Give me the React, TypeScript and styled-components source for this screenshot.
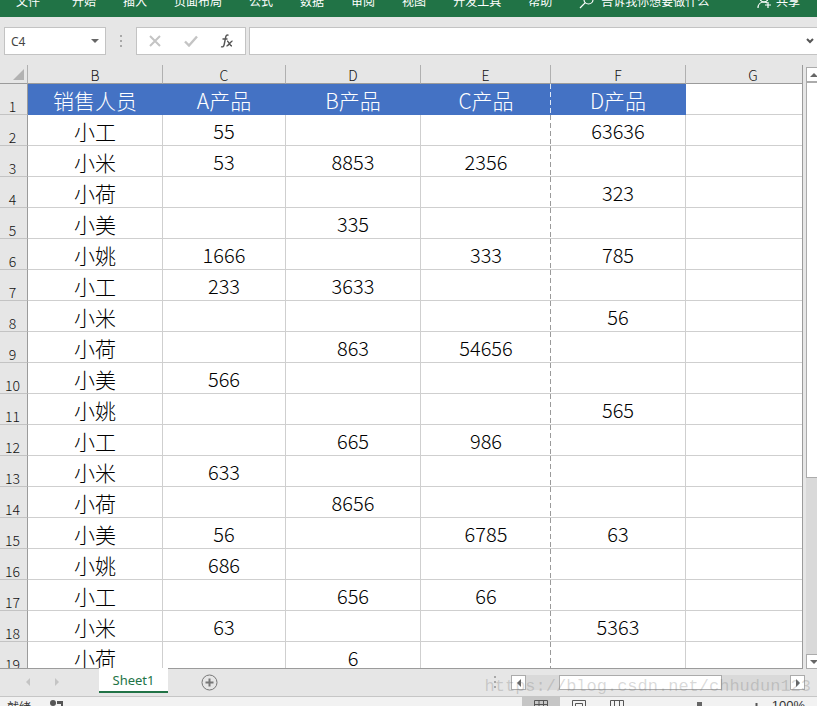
import React from "react";
import styled, { createGlobalStyle } from "styled-components";

const ui = `"Noto Sans", "Noto Sans CJK SC", sans-serif`;
const cjk = `"Noto Sans CJK SC", sans-serif`;

const Global = createGlobalStyle`
  * { box-sizing: border-box; }
  html, body { margin: 0; height: 100%; overflow: hidden; }
  #root { height: 100%; }
  button, input { font: inherit; color: inherit; margin: 0; padding: 0; border: 0; background: none; outline: none; border-radius: 0; }
  button { display: inline-flex; align-items: center; justify-content: center; flex: none; }
  svg { display: block; flex: none; }
`;

const Window = styled.div`
  height: 100vh;
  display: flex;
  flex-direction: column;
  overflow: hidden;
  background: #e6e6e6;
  font-family: ${ui};
  font-size: 12px;
`;

const Ribbon = styled.nav`
  flex: none;
  height: 17px;
  padding: 0 17px 8px 16px;
  display: flex;
  align-items: flex-end;
  gap: 27px;
  overflow: hidden;
  background: #217346;
  color: #fff;
  font-family: ${cjk};
  line-height: 16px;
  white-space: nowrap;
`;

const RibbonTab = styled.button<{ $file?: boolean }>`
  margin-right: ${(p) => (p.$file ? 5 : 0)}px;
`;

const RibbonAction = styled.button<{ $end?: boolean }>`
  gap: ${(p) => (p.$end ? 4 : 7)}px;
  margin-left: ${(p) => (p.$end ? "auto" : "0")};
`;

const FormulaRow = styled.div`
  flex: none;
  display: flex;
  padding: 10px 0 0 4px;
  height: 38px;
`;

const NameBox = styled.div`
  display: flex;
  align-items: center;
  width: 102px;
  padding: 0 6px;
  background: #fff;
  border: 1px solid #c3c3c3;
  color: #444;
  input { flex: 1; min-width: 0; }
`;

const Grip = styled.div`
  width: 30px;
  display: flex;
  align-items: center;
  justify-content: center;
`;

const FormulaTools = styled.div`
  display: flex;
  align-items: center;
  justify-content: space-between;
  width: 110px;
  padding: 0 11px;
  margin-right: 3px;
  background: #fff;
  border: 1px solid #c3c3c3;
`;

const FormulaInput = styled.div`
  flex: 1;
  min-width: 0;
  display: flex;
  align-items: center;
  background: #fff;
  border: 1px solid #c3c3c3;
  border-right: 0;
  padding: 0 3px 0 4px;
  input { flex: 1; min-width: 0; height: 100%; }
`;

const Work = styled.main`
  flex: 1;
  min-height: 0;
  display: flex;
  padding-top: 10px;
`;

const SheetArea = styled.div`
  flex: 1;
  min-width: 0;
  overflow: hidden;
  border-right: 1px solid #9b9b9b;
  border-bottom: 1px solid #9b9b9b;
  background: linear-gradient(#e6e6e6 19px, #fff 19px);
`;

const Sheet = styled.table`
  width: 100%;
  table-layout: fixed;
  border-collapse: separate;
  border-spacing: 0;
  font-family: ${cjk};
`;

const Col = styled.col<{ $w?: number }>`
  width: ${(p) => (p.$w ? `${p.$w}px` : "auto")};
`;

const ColumnHead = styled.th<{ $last?: boolean }>`
  height: 19px;
  padding: 2px 0 0 ${(p) => (p.$last ? 18 : 0)}px;
  background: #e6e6e6;
  border-right: ${(p) => (p.$last ? "0" : "1px solid #b0b0b0")};
  border-bottom: 1px solid #9b9b9b;
  font-size: 14px;
  font-weight: 300;
  line-height: 16px;
  color: #111;
`;

const Corner = styled(ColumnHead)`
  padding: 0 3px 0 0;
  svg { margin-left: auto; }
`;

const RowHead = styled.th`
  height: 31px;
  padding: 0 2px 0 0;
  background: #e6e6e6;
  border-right: 1px solid #9b9b9b;
  border-bottom: 1px solid #c3c3c3;
  vertical-align: bottom;
  font-size: 14px;
  font-weight: 300;
  line-height: 16px;
  color: #111;
`;

const Cell = styled.td<{ $title?: boolean; $name?: boolean; $pageBreak?: boolean }>`
  height: 31px;
  padding: 2px 0 0;
  text-align: center;
  font-size: ${(p) => (p.$title || p.$name ? 21 : 20)}px;
  font-weight: 300;
  line-height: 28px;
  color: ${(p) => (p.$title ? "#fff" : "#000")};
  background: ${(p) => (p.$title ? "#4472c4" : "#fff")};
  border-bottom: 1px solid ${(p) => (p.$title ? "#4472c4" : "#cfcfcf")};
  border-right: 1px solid ${(p) => (p.$title ? "#4472c4" : "#cfcfcf")};
  ${(p) =>
    p.$pageBreak &&
    `border-right: 0;
     background: repeating-linear-gradient(${p.$title ? "#dfe8f6" : "#9a9a9a"} 0 5px, transparent 5px 8px) right / 1px 100% no-repeat ${p.$title ? "#4472c4" : "#fff"};`}
  &:last-child { border-right: 0; }
`;

const VScroll = styled.div`
  flex: none;
  width: 11px;
  margin-left: 3px;
  display: flex;
  flex-direction: column;
  padding-top: 2px;
  overflow: hidden;
  background: linear-gradient(#e6e6e6 2px, #d9d9d9 2px);
`;

const ScrollButton = styled.button`
  width: 15px;
  height: 15px;
  background: #fff;
  border: 1px solid #ababab;
  align-self: flex-start;
`;

const VThumb = styled.div`
  flex: 0 1 396px;
  width: 15px;
  margin-bottom: auto;
  background: #fff;
  border: 1px solid #ababab;
`;

const TabBar = styled.div`
  position: relative;
  flex: none;
  height: 27px;
  display: flex;
  align-items: flex-start;
  padding-left: 22px;
`;

const TabArrow = styled.button`
  width: 12px;
  height: 26px;
  margin-right: 17px;
`;

const SheetTab = styled.button`
  width: 69px;
  height: 25px;
  margin: -1px 33px 0 19px;
  background: #fff;
  border-bottom: 2px solid #217346;
  color: #217346;
  font-size: 13px;
  line-height: 20px;
`;

const AddTab = styled.button`
  height: 26px;
`;

const HScroll = styled.div`
  display: flex;
  width: 318px;
  margin: 6px 12px 0 auto;
`;

const HTrack = styled.div`
  flex: 1;
  display: flex;
  background: #d9d9d9;
  padding-left: 33px;
`;

const HThumb = styled.div`
  width: 163px;
  height: 15px;
  background: #fff;
  border: 1px solid #ababab;
`;

const HGrip = styled.div`
  width: 24px;
  padding: 1px 0 0 7px;
`;

const Watermark = styled.div`
  position: absolute;
  right: 6px;
  top: 8px;
  font-family: "Liberation Mono", monospace;
  font-size: 17px;
  line-height: 20px;
  color: rgba(120, 120, 120, 0.28);
  pointer-events: none;
`;

const StatusBar = styled.footer`
  flex: none;
  height: 10px;
  display: flex;
  align-items: flex-start;
  overflow: hidden;
  padding: 0 12px 0 7px;
  background: #f2f2f2;
  border-top: 1px solid #c6c6c6;
  color: #333;
  line-height: 16px;
`;

const StatusText = styled.span`
  margin-right: 19px;
  padding-top: 2px;
  font-family: ${cjk};
`;

const Views = styled.div`
  display: flex;
  margin-left: auto;
`;

const ViewButton = styled.button<{ $on?: boolean }>`
  width: 38px;
  height: 22px;
  padding-top: 3px;
  align-items: flex-start;
  background: ${(p) => (p.$on ? "#c6c6c6" : "transparent")};
`;

const Zoom = styled.input`
  appearance: none;
  width: 100px;
  height: 22px;
  margin: 0 2px 0 14px;
  &::-webkit-slider-runnable-track { height: 16px; background: linear-gradient(#888, #888) center / 100% 1px no-repeat; }
  &::-webkit-slider-thumb { appearance: none; width: 5px; height: 12px; margin-top: 2px; background: #666; }
`;

const ZoomIn = styled.button`
  width: 9px;
  height: 20px;
  margin-right: 11px;
`;

const ZoomValue = styled.button`
  height: 16px;
  margin-top: 1px;
  font-family: "Liberation Sans", sans-serif;
  font-size: 13px;
`;

type Dir = "up" | "down" | "left" | "right";
const points: Record<Dir, string> = {
  up: "0,6 4,2 8,6",
  down: "0,2 8,2 4,6",
  left: "6,0 2,4 6,8",
  right: "2,0 6,4 2,8",
};
const Arrow = ({ dir, fill = "#666" }: { dir: Dir; fill?: string }) => (
  <svg width="8" height="8" viewBox="0 0 8 8"><polygon points={points[dir]} fill={fill} /></svg>
);
const Dots = () => (
  <svg width="2" height="12" viewBox="0 0 2 12" fill="#a8a8a8">
    <rect y="0" width="2" height="2" /><rect y="5" width="2" height="2" /><rect y="10" width="2" height="2" />
  </svg>
);

const tabs = ["文件", "开始", "插入", "页面布局", "公式", "数据", "审阅", "视图", "开发工具", "帮助"];
const columns = ["B", "C", "D", "E", "F", "G"];
const rows: string[][] = [
  ["销售人员", "A产品", "B产品", "C产品", "D产品"],
  ["小工", "55", "", "", "63636"],
  ["小米", "53", "8853", "2356", ""],
  ["小荷", "", "", "", "323"],
  ["小美", "", "335", "", ""],
  ["小姚", "1666", "", "333", "785"],
  ["小工", "233", "3633", "", ""],
  ["小米", "", "", "", "56"],
  ["小荷", "", "863", "54656", ""],
  ["小美", "566", "", "", ""],
  ["小姚", "", "", "", "565"],
  ["小工", "", "665", "986", ""],
  ["小米", "633", "", "", ""],
  ["小荷", "", "8656", "", ""],
  ["小美", "56", "", "6785", "63"],
  ["小姚", "686", "", "", ""],
  ["小工", "", "656", "66", ""],
  ["小米", "63", "", "", "5363"],
  ["小荷", "", "6", "", ""],
];

export default function App() {
  return (
    <Window>
      <Global />
      <Ribbon>
        {tabs.map((t, i) => <RibbonTab key={t} $file={i === 0}>{t}</RibbonTab>)}
        <RibbonAction>
          <svg width="15" height="16" viewBox="0 0 15 16" fill="none" stroke="#fff" strokeWidth="1.2">
            <circle cx="9.5" cy="6.5" r="4.5" /><path d="M6.3 9.7 1 15" />
          </svg>
          告诉我你想要做什么
        </RibbonAction>
        <RibbonAction $end>
          <svg width="15" height="16" viewBox="0 0 15 16" fill="none" stroke="#fff" strokeWidth="1.2">
            <circle cx="7" cy="5" r="4" /><path d="M1 15c0-3 2-6 6-6 1.500 0 2.500.5 3 1M11 9v6M8 12h6" />
          </svg>
          共享
        </RibbonAction>
      </Ribbon>

      <FormulaRow>
        <NameBox>
          <input aria-label="Name box" defaultValue="C4" />
          <button aria-label="Name list"><Arrow dir="down" /></button>
        </NameBox>
        <Grip><Dots /></Grip>
        <FormulaTools>
          <button aria-label="Cancel">
            <svg width="14" height="12" viewBox="0 0 14 12" stroke="#c4c4c4" strokeWidth="2"><path d="M2 1l10 10M12 1 2 11" /></svg>
          </button>
          <button aria-label="Enter">
            <svg width="14" height="12" viewBox="0 0 14 12" fill="none" stroke="#c4c4c4" strokeWidth="2.400"><path d="M1 6.500 5 10.500 13 1.500" /></svg>
          </button>
          <button aria-label="Insert function">
            <svg width="14" height="14" viewBox="0 0 14 14" fill="none" stroke="#555" strokeWidth="1.400">
              <path d="M8.500 1.300C6.800.4 6 1.500 5.600 3.500L4.200 10.500C3.800 12.500 2.800 13.300 1 12.600M2.500 5h5" />
              <path d="M7 7c2 0 2.500 5 5 5M12.500 7C10.500 7 9 12 6.500 12" />
            </svg>
          </button>
        </FormulaTools>
        <FormulaInput>
          <input aria-label="Formula bar" />
          <button aria-label="Expand formula bar">
            <svg width="8" height="6" viewBox="0 0 8 6" fill="none" stroke="#555" strokeWidth="2"><path d="M1 1l3 3 3-3" /></svg>
          </button>
        </FormulaInput>
      </FormulaRow>

      <Work>
        <SheetArea>
          <Sheet>
            <colgroup>
              <Col $w={28} /><Col $w={135} /><Col $w={123} /><Col $w={135} /><Col $w={130} /><Col $w={135} /><Col />
            </colgroup>
            <thead>
              <tr>
                <Corner aria-label="Select all">
                  <svg width="11" height="11" viewBox="0 0 11 11"><polygon points="11,0 11,11 0,11" fill="#b2b2b2" /></svg>
                </Corner>
                {columns.map((c) => <ColumnHead key={c} scope="col" $last={c === "G"}>{c}</ColumnHead>)}
              </tr>
            </thead>
            <tbody>
              {rows.map((r, i) => (
                <tr key={i}>
                  <RowHead scope="row">{i + 1}</RowHead>
                  {r.map((v, j) => <Cell key={j} $title={i === 0} $name={j === 0} $pageBreak={j === 3}>{v}</Cell>)}
                  <Cell />
                </tr>
              ))}
            </tbody>
          </Sheet>
        </SheetArea>
        <VScroll>
          <ScrollButton aria-label="Scroll up"><Arrow dir="up" /></ScrollButton>
          <VThumb />
          <ScrollButton aria-label="Scroll down"><Arrow dir="down" /></ScrollButton>
        </VScroll>
      </Work>

      <TabBar>
        <TabArrow aria-label="Previous sheet"><Arrow dir="left" fill="#c4c4c4" /></TabArrow>
        <TabArrow aria-label="Next sheet"><Arrow dir="right" fill="#c4c4c4" /></TabArrow>
        <SheetTab>Sheet1</SheetTab>
        <AddTab aria-label="New sheet">
          <svg width="17" height="17" viewBox="0 0 17 17" fill="none" stroke="#777">
            <circle cx="8.500" cy="8.500" r="7.500" /><path d="M8.500 4.500v8M4.500 8.500h8" strokeWidth="2" />
          </svg>
        </AddTab>
        <HScroll>
          <HGrip><Dots /></HGrip>
          <ScrollButton aria-label="Scroll left"><Arrow dir="left" /></ScrollButton>
          <HTrack><HThumb /></HTrack>
          <ScrollButton aria-label="Scroll right"><Arrow dir="right" /></ScrollButton>
        </HScroll>
        <Watermark>https://blog.csdn.net/chhudun123</Watermark>
      </TabBar>

      <StatusBar>
        <StatusText>就绪</StatusText>
        <svg width="14" height="14" viewBox="0 0 14 14" fill="#555"><circle cx="3" cy="6" r="3" /><path d="M7 4h6v9H2v-2h9V7H7z" /></svg>
        <Views>
          <ViewButton $on aria-label="Normal view">
            <svg width="14" height="14" viewBox="0 0 14 14" fill="none" stroke="#555"><path d="M.5.5h13v12H.5zM.5 4.500h13M.5 8.500h13M5 .5v12M9.500.5v12" /></svg>
          </ViewButton>
          <ViewButton aria-label="Page layout">
            <svg width="14" height="14" viewBox="0 0 14 14" fill="none" stroke="#555"><path d="M.5.5h13v12H.5zM3.500 3.500h7v9M3.500 3.500v9M5 6.500h4" /></svg>
          </ViewButton>
          <ViewButton aria-label="Page break preview">
            <svg width="14" height="14" viewBox="0 0 14 14" fill="none" stroke="#555"><path d="M.5.5h13v12H.5zM4.500.5v8M9.500.5v8M4.500 8.500h5" /></svg>
          </ViewButton>
        </Views>
        <Zoom type="range" aria-label="Zoom" min={10} max={190} defaultValue={100} />
        <ZoomIn aria-label="Zoom in">
          <svg width="9" height="9" viewBox="0 0 9 9" stroke="#555" strokeWidth="2"><path d="M4.500 0v9M0 4.500h9" /></svg>
        </ZoomIn>
        <ZoomValue>100%</ZoomValue>
      </StatusBar>
    </Window>
  );
}
